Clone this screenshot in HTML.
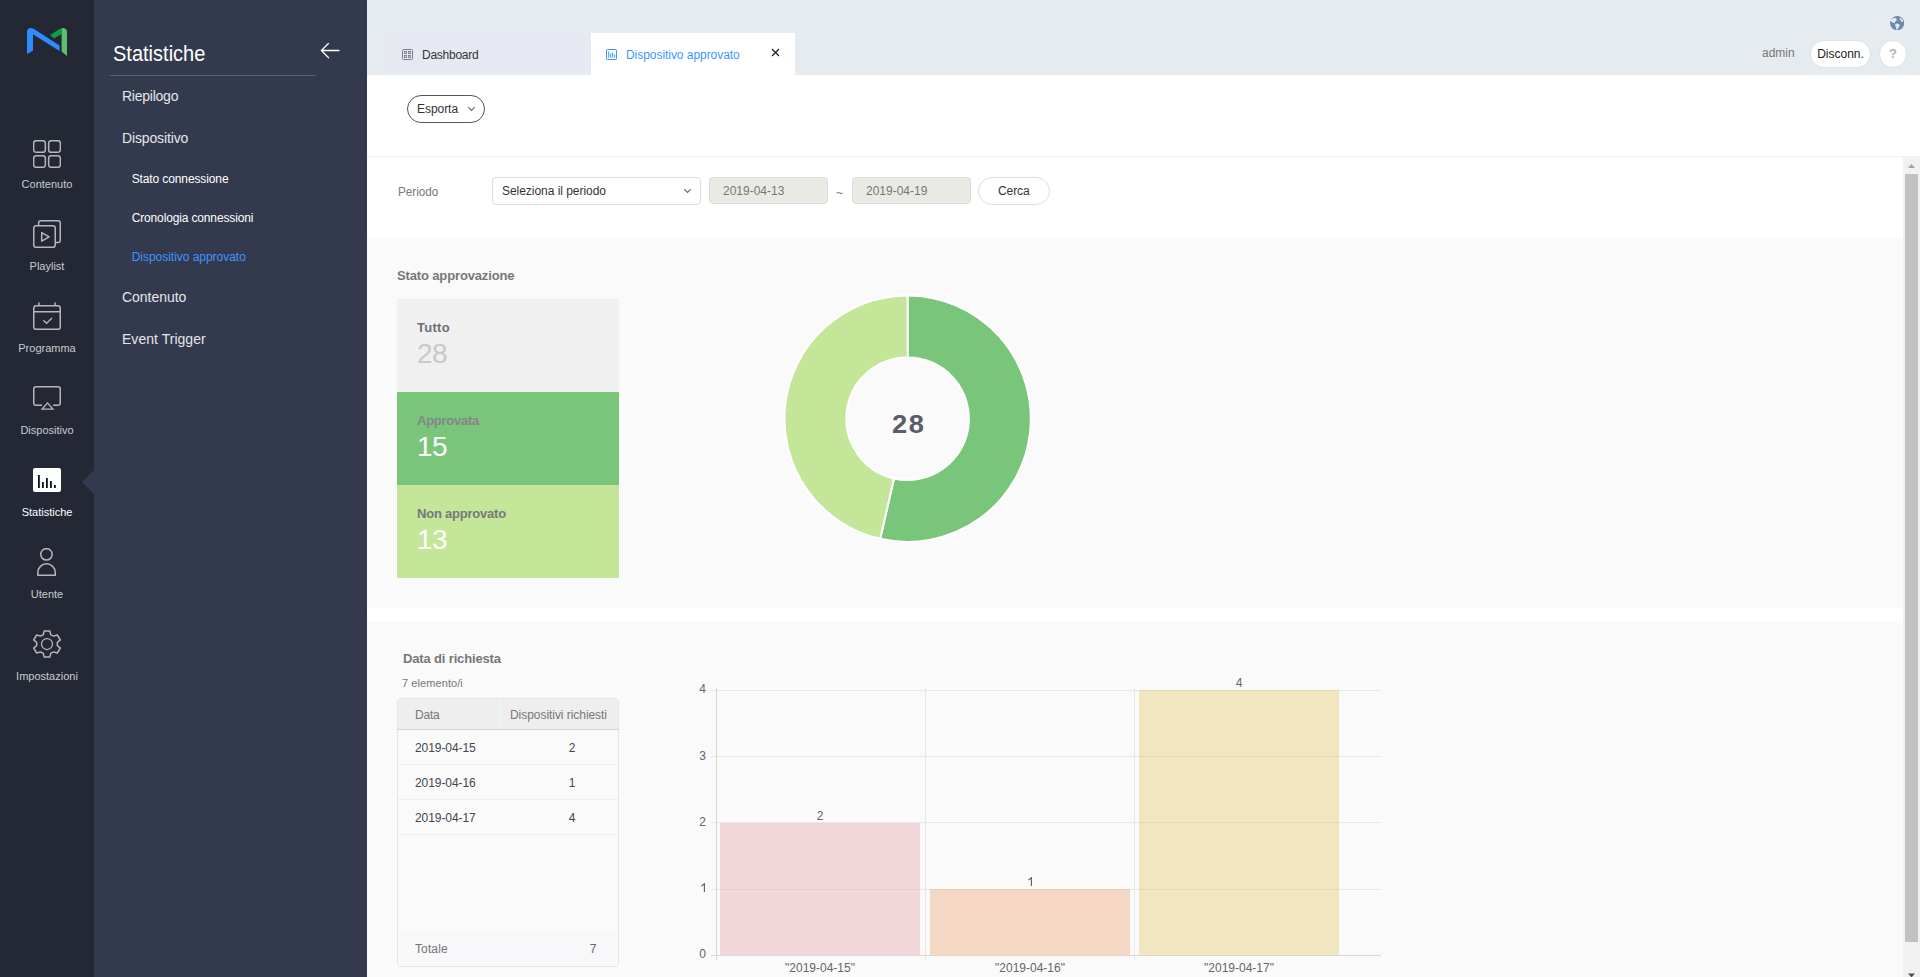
<!DOCTYPE html>
<html lang="it">
<head>
<meta charset="utf-8">
<title>MagicINFO - Dispositivo approvato</title>
<style>
*{box-sizing:border-box;margin:0;padding:0}
html,body{width:1920px;height:977px;overflow:hidden;background:#fff;font-family:"Liberation Sans",sans-serif;font-size:12px;color:#333}
.abs{position:absolute}
#lnb{position:absolute;left:0;top:0;width:94px;height:977px;background:#242834}
#snb{position:absolute;left:94px;top:0;width:273px;height:977px;background:#333a4d}
#top{position:absolute;left:367px;top:0;width:1553px;height:75px;background:#e6ebef}
#main{position:absolute;left:367px;top:75px;width:1553px;height:902px;background:#fff}
.nav{position:absolute;left:0;width:94px;text-align:center;color:#c8cbd0;font-size:11px;line-height:14px}
.nav svg{position:absolute;left:33px;top:0}
.nav span{position:absolute;left:0;width:94px;top:37px}
.nav.on{color:#fff}
.m1{position:absolute;left:122px;color:#e4e6ea;font-size:14px;line-height:18px;white-space:nowrap;letter-spacing:0}
.m2{position:absolute;left:132px;color:#fff;font-size:12px;line-height:16px;white-space:nowrap}
.m2.on{color:#3d96ff}
.t{position:absolute;white-space:nowrap}
</style>
</head>
<body>
<!-- left icon bar -->
<div id="lnb">
<svg class="abs" style="left:0;top:0" width="94" height="80" viewBox="0 0 94 80">
<path d="M27 54.2 L27 32 Q27 28 31 28 Q32.6 28 34 28.9 L59.5 45.6 L59.5 51 L33 34.2 L33 50.4 Z" fill="#2d8cff"/>
<path d="M50 35 L60 28.7 Q61 28.1 61.6 28.2 L61.6 34 L54 38.6 Z" fill="#0f9d48"/>
<path d="M61.6 51.6 L61.6 28.2 Q62.4 27.9 63.4 28 Q67 28.4 67 32 L67 56 Z" fill="#5cbf6b"/>
</svg>
<div class="nav" style="top:140px"><svg width="28" height="28" viewBox="0 0 28 28" fill="none" stroke="#b5b7bb" stroke-width="1.5"><rect x=".65" y=".65" width="11.7" height="11.7" rx="2.6"/><rect x="15.65" y=".65" width="11.7" height="11.7" rx="2.6"/><rect x=".65" y="15.65" width="11.7" height="11.7" rx="2.6"/><rect x="15.65" y="15.65" width="11.7" height="11.7" rx="2.6"/></svg><span>Contenuto</span></div>
<div class="nav" style="top:222px"><svg width="28" height="28" viewBox="0 0 28 28" fill="none" stroke="#b5b7bb" stroke-width="1.5" style="top:-2px"><path d="M5.6 5.6 V3 Q5.6 .75 7.9 .75 H25 Q27.25 .75 27.25 3 V20.2 Q27.25 22.5 25 22.5 H22.4"/><rect x=".75" y="5.75" width="21.5" height="21.5" rx="2.6"/><path d="M8.7 12.7 L16.1 16.95 L8.7 21.2 Z" stroke-linejoin="round"/></svg><span>Playlist</span></div>
<div class="nav" style="top:304px"><svg width="28" height="28" viewBox="0 0 28 28" fill="none" stroke="#b5b7bb" stroke-width="1.5" style="top:-2px"><rect x=".75" y="3.75" width="26.5" height="23.5" rx="2.6"/><path d="M.75 9.8 H27.25 M5.9 .4 V3.6 M22.1 .4 V3.6"/><path d="M10.3 18.2 L13.6 21.3 L19 16" stroke-width="1.3"/></svg><span>Programma</span></div>
<div class="nav" style="top:386px"><svg width="28" height="28" viewBox="0 0 28 28" fill="none" stroke="#b5b7bb" stroke-width="1.5"><path d="M9 19.25 H3 Q.75 19.25 .75 17 V3 Q.75 .75 3 .75 H25 Q27.25 .75 27.25 3 V17 Q27.25 19.25 25 19.25 H20"/><path d="M14.5 16.9 L20 23.2 H9 Z" stroke-width="1.3" stroke-linejoin="miter"/></svg><span>Dispositivo</span></div>
<div class="nav on" style="top:468px"><svg width="28" height="28" viewBox="0 0 28 28"><rect x="0" y="0" width="28" height="24" rx="2" fill="#fff"/><path d="M5 7 H6.8 V20 H5 Z M9 14 H10.8 V20 H9 Z M13 10 H14.8 V20 H13 Z M17 13 H18.8 V20 H17 Z M21 17 H22.8 V20 H21 Z" fill="#0c101c"/></svg><span>Statistiche</span></div>
<div class="nav" style="top:550px"><svg width="28" height="28" viewBox="0 0 28 28" fill="none" stroke="#b5b7bb" stroke-width="1.5" style="top:-2px"><circle cx="13.45" cy="6.35" r="5.7"/><path d="M4.85 27.3 V24.5 A8.7 8.7 0 0 1 22.25 24.5 V27.3 Z" stroke-linejoin="miter"/></svg><span>Utente</span></div>
<div class="nav" style="top:632px"><svg width="28" height="28" viewBox="0 0 28 28" fill="none" stroke="#b5b7bb" stroke-width="1.5" style="top:-2px"><circle cx="14" cy="14" r="5.5" stroke-width="1.25"/><path d="M11.2 .9 H16.8 L17.7 4.6 L20.4 6.1 L24.3 5 L27.3 9.9 L24.3 12.5 V15.5 L27.3 18.1 L24.3 23 L20.4 21.9 L17.7 23.4 L16.8 27.1 H11.2 L10.3 23.4 L7.6 21.9 L3.7 23 L.7 18.1 L3.7 15.5 V12.5 L.7 9.9 L3.7 5 L7.6 6.1 L10.3 4.6 Z" stroke-linejoin="round"/></svg><span>Impostazioni</span></div>
<div class="abs" style="left:82px;top:470px;width:0;height:0;border-top:12px solid transparent;border-bottom:12px solid transparent;border-right:12px solid #333a4d"></div>
</div>
<!-- sub navigation -->
<div id="snb">
<div class="t" style="left:19.2px;top:41px;font-size:22px;line-height:26px;color:#fff;transform:scaleX(.91);transform-origin:0 50%">Statistiche</div>
<svg class="abs" style="left:226px;top:43px" width="20" height="16" viewBox="0 0 20 16" fill="none" stroke="#fff" stroke-width="1.3" stroke-linecap="round"><path d="M1.4 7.5 H19 M8.6 .3 L1.4 7.5 L8.6 14.7"/></svg>
<div class="abs" style="left:16px;top:75px;width:206px;height:1px;background:#5b6173"></div>
<div class="m1" style="left:28px;top:87px;letter-spacing:-.24px">Riepilogo</div>
<div class="m1" style="left:28px;top:129px;letter-spacing:-.14px">Dispositivo</div>
<div class="m2" style="left:37.7px;top:171px;letter-spacing:-.115px">Stato connessione</div>
<div class="m2" style="left:37.7px;top:210px;letter-spacing:-.146px">Cronologia connessioni</div>
<div class="m2 on" style="left:37.7px;top:249px;letter-spacing:-.03px">Dispositivo approvato</div>
<div class="m1" style="left:28px;top:288px;letter-spacing:-.04px">Contenuto</div>
<div class="m1" style="left:28px;top:330px;letter-spacing:.034px">Event Trigger</div>
</div>
<!-- top bar -->
<div id="top">
<div class="abs" style="left:20px;top:33px;width:204px;height:42px;background:#e6e9f2"></div>
<svg class="abs" style="left:35px;top:49px" width="11" height="11" viewBox="0 0 11 11" fill="none" stroke="#7a7d84" stroke-width="1"><rect x=".5" y=".5" width="10" height="10" rx="1"/><rect x="2.5" y="2.5" width="2" height="2" stroke-width=".9"/><rect x="6.5" y="2.5" width="2" height="2" stroke-width=".9"/><rect x="2.5" y="6.5" width="2" height="2" stroke-width=".9"/><rect x="6.5" y="6.5" width="2" height="2" stroke-width=".9"/></svg>
<div class="t" style="left:55px;top:47px;font-size:12px;line-height:16px;color:#333;letter-spacing:-.25px">Dashboard</div>
<div class="abs" style="left:224px;top:33px;width:204px;height:42px;background:#fff"></div>
<svg class="abs" style="left:239px;top:49px" width="11" height="11" viewBox="0 0 11 11" fill="none" stroke="#3d96ff" stroke-width="1"><rect x=".5" y=".5" width="10" height="10" rx=".8"/><path d="M2.7 2.4 V8.6 M4.7 4.2 V8.6 M6.7 3.4 V8.6 M8.7 5.6 V8.6" stroke-width="1"/></svg>
<div class="t" style="left:259px;top:47px;font-size:12px;line-height:16px;color:#3d96ff;letter-spacing:-.05px">Dispositivo approvato</div>
<svg class="abs" style="left:404px;top:48px" width="9" height="9" viewBox="0 0 9 9" fill="none" stroke="#222" stroke-width="1.3"><path d="M1 1 L8 8 M8 1 L1 8"/></svg>
<div class="t" style="left:1395px;top:45px;font-size:12px;line-height:16px;color:#777">admin</div>
<div class="abs" style="left:1443px;top:40px;width:61px;height:28px;border-radius:14px;background:#fff;border:1px solid #dde2e7;text-align:center;font-size:12px;line-height:26px;color:#222">Disconn.</div>
<div class="abs" style="left:1512px;top:40px;width:28px;height:28px;border-radius:14px;background:#fff;border:1px solid #dde2e7;text-align:center;font-size:13px;font-weight:700;line-height:25px;color:#b2b2b2">?</div>
<svg class="abs" style="left:1522.7px;top:15.7px" width="14.4" height="14.4" viewBox="0 0 14.4 14.4"><circle cx="7.2" cy="7.2" r="7.1" fill="#6e8aaa"/><path d="M.3 5 L1.1 3.8 L3.3 2.1 L6.4 2.2 L6.6 4.6 L5.1 5.7 L4.5 7.3 L2.9 6.8 L1.3 5.5 Z M5.3 8.1 L7.2 7.45 L9.3 8.6 L9.85 9.85 L7.2 13.6 L6.1 13.6 L6.25 11 L5.2 10 Z M9 2.6 L10.9 2.3 L12.8 4.1 L13 6 L11.5 6.1 L10.9 4.4 Z" fill="#e6ebef"/></svg>
</div>
<!-- main -->
<div id="main"></div>
<div id="pg" class="abs" style="left:0;top:0;width:1920px;height:977px">
<!-- toolbar -->
<div class="abs" style="left:407px;top:95px;width:78px;height:28px;border:1px solid #555;border-radius:14px;background:#fff"></div>
<div class="t" style="left:417px;top:101px;font-size:12px;line-height:16px;color:#333;letter-spacing:-.05px">Esporta</div>
<svg class="abs" style="left:467px;top:106px" width="9" height="7" viewBox="0 0 9 7" fill="none" stroke="#666" stroke-width="1.1"><path d="M1.3 1.2 L4.5 4.4 L7.7 1.2"/></svg>
<div class="abs" style="left:367px;top:156px;width:1553px;height:1px;background:#f1f1f1"></div>
<!-- filter row -->
<div class="t" style="left:398px;top:183.7px;font-size:13px;line-height:16px;color:#777;transform:scaleX(.9);transform-origin:0 50%">Periodo</div>
<div class="abs" style="left:492px;top:177px;width:209px;height:28px;border:1px solid #d9dce3;border-radius:4px;background:#fff"></div>
<div class="t" style="left:502px;top:183px;font-size:12px;line-height:16px;color:#333;letter-spacing:-.04px">Seleziona il periodo</div>
<svg class="abs" style="left:683.2px;top:188px" width="9" height="7" viewBox="0 0 9 7" fill="none" stroke="#666" stroke-width="1.1"><path d="M1.3 1.2 L4.5 4.4 L7.7 1.2"/></svg>
<div class="abs" style="left:709px;top:177px;width:119px;height:27px;border:1px solid #dcdce1;border-radius:4px;background:#eae9e4"></div>
<div class="t" style="left:723px;top:183px;font-size:12px;line-height:16px;color:#777">2019-04-13</div>
<div class="t" style="left:836px;top:185px;font-size:12px;line-height:16px;color:#777">~</div>
<div class="abs" style="left:852px;top:177px;width:119px;height:27px;border:1px solid #dcdce1;border-radius:4px;background:#eae9e4"></div>
<div class="t" style="left:866px;top:183px;font-size:12px;line-height:16px;color:#777">2019-04-19</div>
<div class="abs" style="left:978px;top:177px;width:72px;height:28px;border:1px solid #ddd;border-radius:14px;background:#fff"></div>
<div class="t" style="left:998px;top:183px;font-size:12px;line-height:16px;color:#333;letter-spacing:-.1px">Cerca</div>
<!-- section 1 -->
<div class="abs" style="left:367px;top:238px;width:1536px;height:370px;background:#fafafa"></div>
<div class="t" style="left:397px;top:268px;font-size:13px;line-height:16px;font-weight:700;color:#777;letter-spacing:-.14px">Stato approvazione</div>
<div class="abs" style="left:397px;top:299px;width:222px;height:93px;background:#f0f0f0"></div>
<div class="abs" style="left:397px;top:392px;width:222px;height:93px;background:#79c67a"></div>
<div class="abs" style="left:397px;top:485px;width:222px;height:93px;background:#c3e699"></div>
<div class="t" style="left:417px;top:320px;font-size:13px;line-height:16px;font-weight:700;color:#6d6d78;letter-spacing:.28px">Tutto</div>
<div class="t" style="left:417px;top:338.4px;font-size:28px;line-height:32px;color:#c9c9c9;letter-spacing:-.55px">28</div>
<div class="t" style="left:417px;top:413px;font-size:13px;line-height:16px;font-weight:700;color:#86838a;letter-spacing:-.26px">Approvata</div>
<div class="t" style="left:417px;top:431.4px;font-size:28px;line-height:32px;color:#fff;letter-spacing:-.55px">15</div>
<div class="t" style="left:417px;top:506px;font-size:13px;line-height:16px;font-weight:700;color:#78767c;letter-spacing:-.22px">Non approvato</div>
<div class="t" style="left:417px;top:524.4px;font-size:28px;line-height:32px;color:#fff;letter-spacing:-.55px">13</div>
<svg class="abs" style="left:767px;top:278px" width="282" height="282" viewBox="767 278 282 282">
<path d="M907.60 295.50 A123.2 123.2 0 1 1 880.19 538.81 L893.96 478.46 A61.3 61.3 0 1 0 907.60 357.40 Z" fill="#79c67a" stroke="#fff" stroke-width="2" stroke-linejoin="round"/>
<path d="M880.19 538.81 A123.2 123.2 0 0 1 907.60 295.50 L907.60 357.40 A61.3 61.3 0 0 0 893.96 478.46 Z" fill="#c3e699" stroke="#fff" stroke-width="2" stroke-linejoin="round"/>
</svg>
<div class="t" style="left:858px;top:408.6px;width:100px;text-align:center;font-size:25px;line-height:30px;font-weight:700;color:#5c5c68;letter-spacing:1.6px;text-indent:1.6px;transform:scaleX(1.09)">28</div>
<!-- section 2 -->
<div class="abs" style="left:367px;top:621px;width:1536px;height:356px;background:#fafafa"></div>
<div class="t" style="left:403px;top:651px;font-size:13px;line-height:16px;font-weight:700;color:#777;letter-spacing:-.15px">Data di richiesta</div>
<div class="t" style="left:402px;top:676px;font-size:11px;line-height:14px;color:#777;letter-spacing:.08px">7 elemento/i</div>
<!-- table -->
<div class="abs" style="left:397px;top:698px;width:222px;height:269px;border:1px solid #e6e6e6;border-radius:4px;background:#fafafa;overflow:hidden">
<div class="abs" style="left:0;top:0;width:220px;height:31px;background:#eee;border-bottom:1px solid #d4d4d4"></div>
<div class="abs" style="left:101px;top:0;width:1px;height:30px;background:#f6f6f6"></div>
<div class="abs" style="left:0;top:65px;width:220px;height:1px;background:#eee"></div>
<div class="abs" style="left:0;top:100px;width:220px;height:1px;background:#eee"></div>
<div class="abs" style="left:0;top:135px;width:220px;height:1px;background:#eee"></div>
<div class="abs" style="left:0;top:231px;width:220px;height:38px;background:#f8f8fa"></div>
</div>
<div class="t" style="left:415px;top:707px;font-size:12px;line-height:16px;color:#777;letter-spacing:-.2px">Data</div>
<div class="t" style="left:510px;top:707px;font-size:12px;line-height:16px;color:#777;letter-spacing:-.05px">Dispositivi richiesti</div>
<div class="t" style="left:415px;top:740px;font-size:12px;line-height:16px;color:#454552;letter-spacing:-.08px">2019-04-15</div>
<div class="t" style="left:415px;top:775px;font-size:12px;line-height:16px;color:#454552;letter-spacing:-.08px">2019-04-16</div>
<div class="t" style="left:415px;top:810px;font-size:12px;line-height:16px;color:#454552;letter-spacing:-.08px">2019-04-17</div>
<div class="t" style="left:552px;top:740px;width:40px;text-align:center;font-size:12px;line-height:16px;color:#454552">2</div>
<div class="t" style="left:552px;top:775px;width:40px;text-align:center;font-size:12px;line-height:16px;color:#454552">1</div>
<div class="t" style="left:552px;top:810px;width:40px;text-align:center;font-size:12px;line-height:16px;color:#454552">4</div>
<div class="t" style="left:415px;top:941px;font-size:12px;line-height:16px;color:#757575;letter-spacing:.12px">Totale</div>
<div class="t" style="left:573px;top:941px;width:40px;text-align:center;font-size:12px;line-height:16px;color:#666">7</div>
<!-- bar chart -->
<svg class="abs" style="left:680px;top:670px" width="720" height="307" viewBox="680 670 720 307" shape-rendering="crispEdges">
<g stroke="#e8e8e8" stroke-width="1">
<path d="M711 690.5 H1381 M711 756.5 H1381 M711 822.5 H1381 M711 889.5 H1381"/>
<path d="M925.5 688 V960 M1134.5 688 V960"/>
</g>
<g stroke="#d8d8d8" stroke-width="1"><path d="M716.5 688 V960 M711 955.5 H1381"/></g>
<rect x="720" y="823" width="200" height="132" fill="rgba(230,150,160,.36)"/>
<rect x="930" y="889" width="200" height="66" fill="rgba(237,160,105,.38)"/>
<rect x="1139" y="690" width="200" height="265" fill="rgba(225,195,90,.36)"/>
</svg>
<div class="t" style="left:690px;top:681px;width:16px;text-align:right;font-size:12px;line-height:16px;color:#666">4</div>
<div class="t" style="left:690px;top:747.5px;width:16px;text-align:right;font-size:12px;line-height:16px;color:#666">3</div>
<div class="t" style="left:690px;top:814px;width:16px;text-align:right;font-size:12px;line-height:16px;color:#666">2</div>
<svg class="abs" style="left:700.5px;top:883px" width="5" height="10" viewBox="0 0 5 10"><path d="M4 0 V9 H2.85 V2 Q1.8 3 .2 3.5 V2.4 Q2.2 1.5 3.1 0 Z" fill="#666"/></svg>
<div class="t" style="left:690px;top:946px;width:16px;text-align:right;font-size:12px;line-height:16px;color:#666">0</div>
<div class="t" style="left:770px;top:808px;width:100px;text-align:center;font-size:12px;line-height:16px;color:#666">2</div>
<svg class="abs" style="left:1027.8px;top:876.9px" width="5" height="10" viewBox="0 0 5 10"><path d="M4 0 V9 H2.85 V2 Q1.8 3 .2 3.5 V2.4 Q2.2 1.5 3.1 0 Z" fill="#666"/></svg>
<div class="t" style="left:1189px;top:675px;width:100px;text-align:center;font-size:12px;line-height:16px;color:#666">4</div>
<div class="t" style="left:770px;top:960px;width:100px;text-align:center;font-size:12px;line-height:16px;color:#666">"2019-04-15"</div>
<div class="t" style="left:980px;top:960px;width:100px;text-align:center;font-size:12px;line-height:16px;color:#666">"2019-04-16"</div>
<div class="t" style="left:1189px;top:960px;width:100px;text-align:center;font-size:12px;line-height:16px;color:#666">"2019-04-17"</div>
<!-- scrollbar -->
<div class="abs" style="left:1903px;top:157px;width:17px;height:820px;background:#f1f1f1"></div>
<div class="abs" style="left:1905px;top:174px;width:13px;height:768px;background:#c1c1c1"></div>
<svg class="abs" style="left:1903px;top:157px" width="17" height="17" viewBox="0 0 17 17"><path d="M5 11 L8.5 7 L12 11 Z" fill="#a3a3a3"/></svg>
<svg class="abs" style="left:1903px;top:966.5px" width="17" height="17" viewBox="0 0 17 17"><path d="M5 6.5 L8.5 10.5 L12 6.5 Z" fill="#505050"/></svg>
</div>
</body>
</html>
